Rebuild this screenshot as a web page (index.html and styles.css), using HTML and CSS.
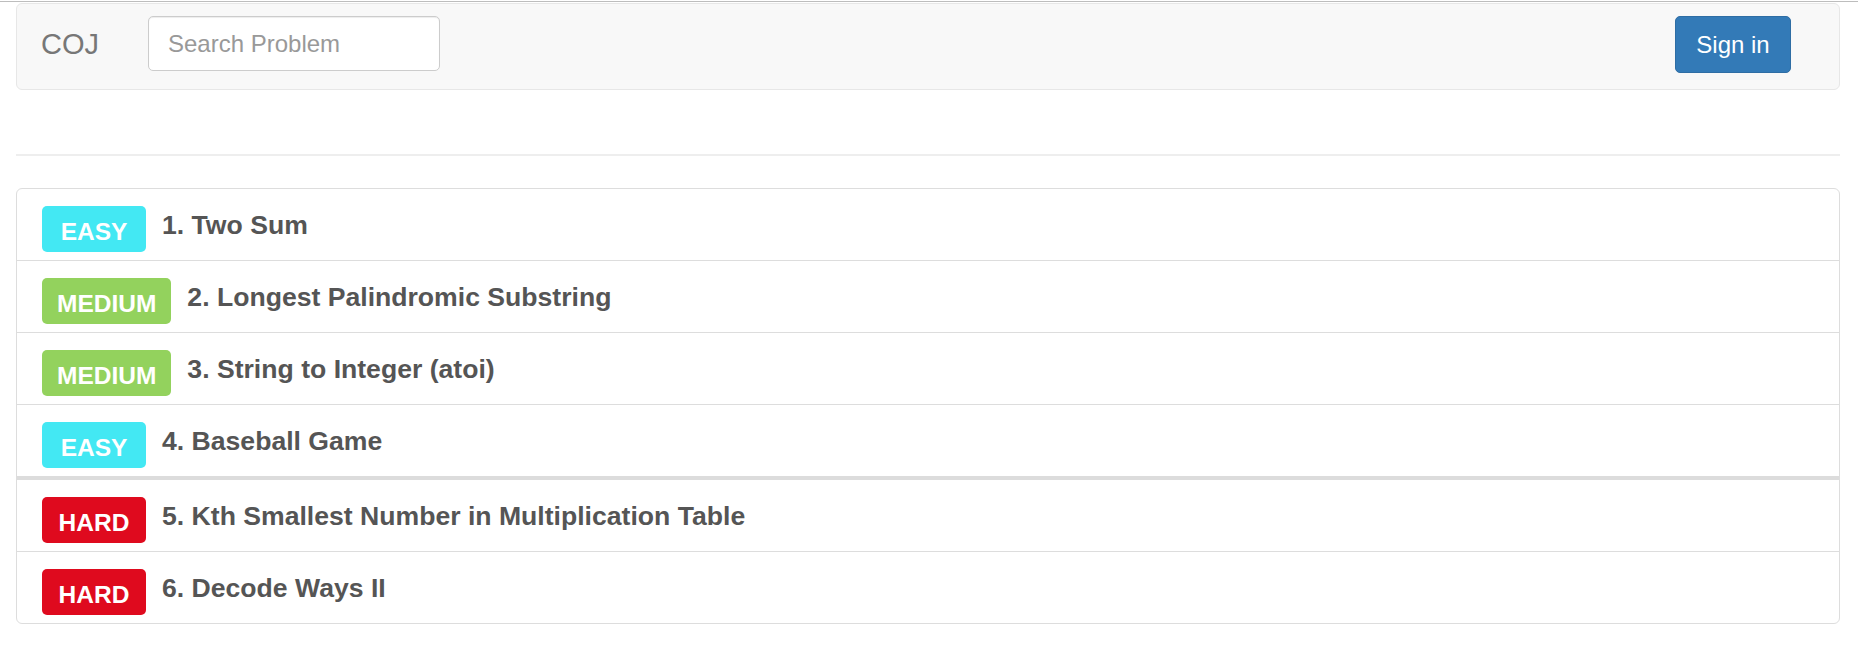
FILE: index.html
```html
<!DOCTYPE html>
<html lang="en">
<head>
<meta charset="utf-8">
<title>COJ</title>
<link rel="stylesheet" href="styles.css">
</head>
<body>
<div class="topline"></div>
<div class="page">
  <nav class="navbar">
    <a class="brand" href="#">COJ</a>
    <input class="search" type="text" placeholder="Search Problem">
    <button class="btn-signin" type="button">Sign in</button>
  </nav>
  <hr class="divider">
  <ul class="problems">
    <li class="problem"><span class="badge easy">EASY</span><span class="title">1. Two Sum</span></li>
    <li class="problem"><span class="badge medium">MEDIUM</span><span class="title">2. Longest Palindromic Substring</span></li>
    <li class="problem"><span class="badge medium">MEDIUM</span><span class="title">3. String to Integer (atoi)</span></li>
    <li class="problem thick"><span class="badge easy">EASY</span><span class="title">4. Baseball Game</span></li>
    <li class="problem"><span class="badge hard">HARD</span><span class="title">5. Kth Smallest Number in Multiplication Table</span></li>
    <li class="problem last"><span class="badge hard">HARD</span><span class="title">6. Decode Ways II</span></li>
  </ul>
</div>
</body>
</html>
```
FILE: styles.css
```css
* { box-sizing: border-box; }
html, body {
  margin: 0;
  padding: 0;
  background: #fff;
  font-family: "Liberation Sans", Arial, Helvetica, sans-serif;
}
.topline {
  height: 1px;
  margin-top: 1px;
  background: #bdbdbd;
}
.page {
  padding: 0 18px 0 16px;
}
.navbar {
  margin-top: 1px;
  height: 87px;
  display: flex;
  align-items: flex-start;
  padding: 12px 48px 0 23px;
  background: #f8f8f8;
  border: 1px solid #e7e7e7;
  border-radius: 6px;
}
.brand {
  font-size: 29px;
  line-height: 55px;
  padding-top: 1px;
  color: #777;
  text-decoration: none;
  width: 58px;
  margin-left: 1px;
}
.search {
  margin-left: 49px;
  width: 292px;
  height: 55px;
  padding: 0 19px;
  font-family: inherit;
  font-size: 24px;
  color: #555;
  background: #fff;
  border: 1px solid #ccc;
  border-radius: 5px;
  box-shadow: inset 0 1px 1px rgba(0,0,0,.075);
  outline: none;
}
.search::placeholder { color: #999; }
.btn-signin {
  margin-left: auto;
  width: 116px;
  height: 57px;
  padding: 0;
  font-family: inherit;
  font-size: 24px;
  line-height: 55px;
  color: #fff;
  background: #337ab7;
  border: 1px solid #2e6da4;
  border-radius: 5px;
}
.divider {
  margin: 64px 0 0;
  border: 0;
  height: 2px;
  background: #eee;
}
.problems {
  list-style: none;
  margin: 32px 0 0;
  padding: 0;
  border: 1px solid #ddd;
  border-radius: 6px;
}
.problem {
  display: flex;
  align-items: flex-start;
  height: 72px;
  padding: 17px 25px 0;
  border-bottom: 1px solid #ddd;
}
.problem.thick {
  height: 75px;
  border-bottom: 4px solid #dcdcdc;
}
.problem.last {
  height: 71px;
  border-bottom: 0;
}
.badge {
  min-width: 104px;
  height: 46px;
  padding: 5px 15px 0;
  line-height: 41px;
  font-size: 24.5px;
  font-weight: bold;
  color: #fff;
  text-align: center;
  border-radius: 5px;
}
.badge.easy { background: #43e8f3; }
.badge.medium { background: #93d25d; }
.badge.hard { background: #df0a1e; }
.title {
  margin-left: 16px;
  margin-top: 4px;
  font-size: 26.6px;
  line-height: 30px;
  font-weight: bold;
  color: #555;
}
```
